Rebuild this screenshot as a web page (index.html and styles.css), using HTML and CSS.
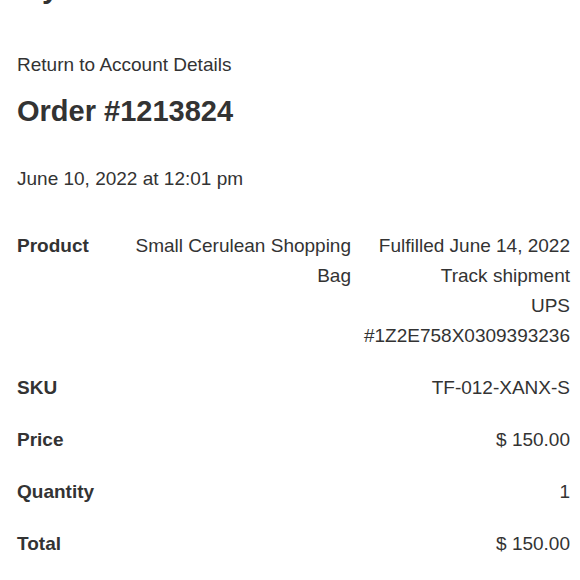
FILE: index.html
```html
<!DOCTYPE html>
<html lang="en">
<head>
<meta charset="utf-8">
<title>Order #1213824</title>
<link rel="stylesheet" href="styles.css">
</head>
<body>
<main class="account">
  <h1 class="page-title">My Account</h1>
  <a class="back-link" href="#">Return to Account Details</a>
  <h2 class="order-title">Order #1213824</h2>
  <p class="order-date">June 10, 2022 at 12:01 pm</p>
  <div class="order-table">
    <div class="row row-product">
      <div class="label">Product</div>
      <div class="name">Small Cerulean Shopping Bag</div>
      <div class="fulfillment">
        <div>Fulfilled June 14, 2022</div>
        <a href="#">Track shipment</a>
        <div>UPS</div>
        <div>#1Z2E758X0309393236</div>
      </div>
    </div>
    <div class="row">
      <div class="label">SKU</div>
      <div class="value">TF-012-XANX-S</div>
    </div>
    <div class="row">
      <div class="label">Price</div>
      <div class="value">$ 150.00</div>
    </div>
    <div class="row">
      <div class="label">Quantity</div>
      <div class="value">1</div>
    </div>
    <div class="row">
      <div class="label">Total</div>
      <div class="value">$ 150.00</div>
    </div>
  </div>
</main>
</body>
</html>
```
FILE: styles.css
```css
html, body {
  margin: 0;
  padding: 0;
  background: #ffffff;
}

body {
  font-family: "Liberation Sans", Arial, Helvetica, sans-serif;
  font-size: 19px;
  line-height: 30px;
  color: #333333;
  overflow: hidden;
}

.account {
  padding: 0 10px 0 17px;
}

.page-title {
  font-size: 30px;
  line-height: 36px;
  font-weight: bold;
  margin: -30px 0 0;
}

.back-link {
  display: block;
  color: #333333;
  text-decoration: none;
  margin-top: 44px;
}

.order-title {
  font-size: 29px;
  line-height: 36px;
  font-weight: bold;
  margin: 13px 0 0;
}

.order-date {
  margin: 35px 0 0;
}

.order-table {
  margin-top: 26px;
}

.row {
  display: grid;
  grid-template-columns: 116px 1fr;
  padding: 11px 0;
}

.row-product {
  grid-template-columns: 116px 218px 1fr;
}

.label {
  font-weight: bold;
}

.name,
.fulfillment,
.value {
  text-align: right;
}

.fulfillment a {
  display: block;
  color: #333333;
  text-decoration: none;
}
```
